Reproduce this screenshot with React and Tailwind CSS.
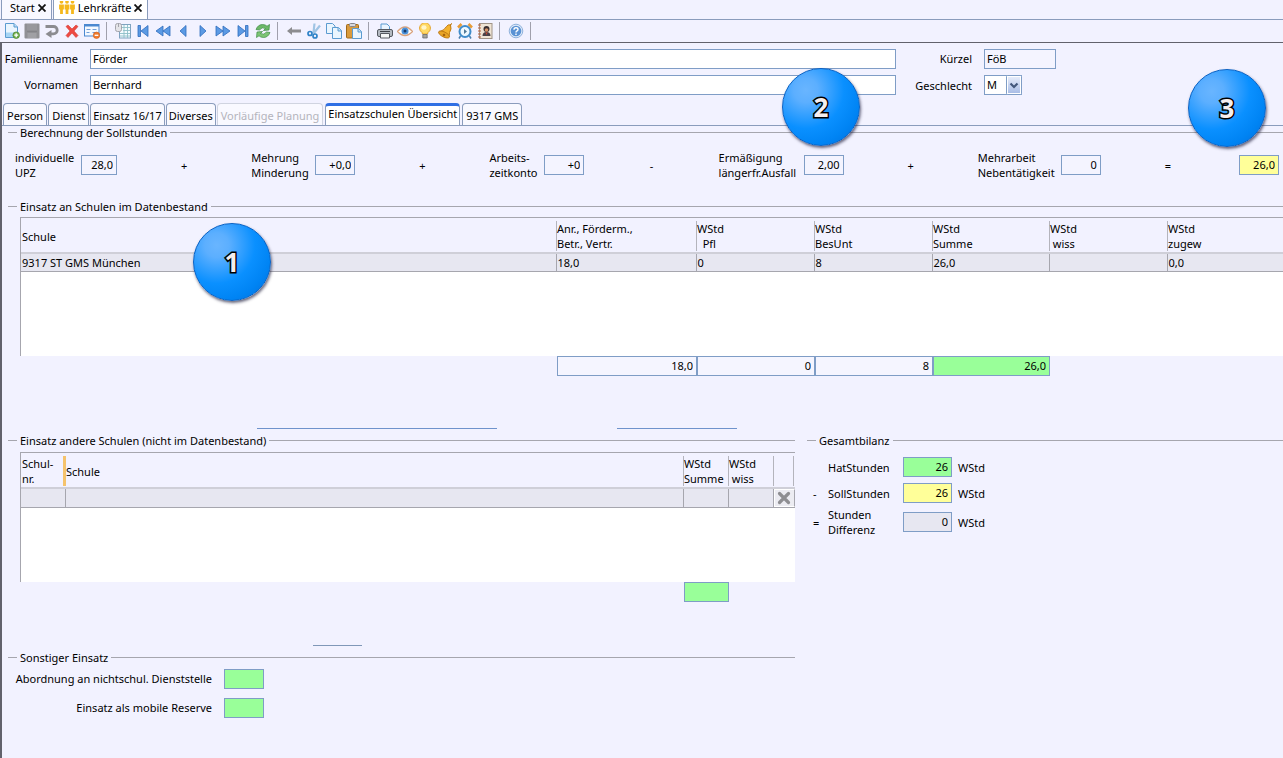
import clsx from 'clsx';

function Svg({ children }) {
  return (
    <svg viewBox="0 0 16 16" className="h-4 w-4" aria-hidden="true">
      {children}
    </svg>
  );
}

const blue = { fill: '#5b9ae4', stroke: '#2f6cbc', strokeWidth: 0.8, strokeLinejoin: 'round' };
const paper = { fill: '#eaf5fe', stroke: '#5b9bd0', strokeWidth: 1 };

const icons = {
  Neu: (
    <Svg>
      <path d="M1.500 0.500h8.500l3.500 3.500v10.500h-12z" {...paper} />
      <path d="M10 0.500v3.500h3.500" fill="#b9dcf5" stroke="#5b9bd0" />
      <path d="M2 9.500h11v4.500h-11z" fill="#a6d4f4" />
      <circle cx="12.200" cy="12.200" r="3.300" fill="#6fae4a" stroke="#4b8530" strokeWidth="0.700" />
      <path d="M12.200 10.200v4M10.200 12.200h4" stroke="#fff" strokeWidth="1.300" />
    </Svg>
  ),
  Speichern: (
    <Svg>
      <path d="M0.500 1.500q0-1 1-1h13q1 0 1 1v13q0 1-1 1h-13q-1 0-1-1z" fill="#909094" />
      <path d="M3 1h10v6h-10z" fill="#98989c" />
      <path d="M3.500 10h9v5h-9z" fill="#a0a0a4" />
      <path d="M3 8.500h10" stroke="#848488" />
    </Svg>
  ),
  Zurück: (
    <Svg>
      <path d="M1.500 3.500h8a3.700 3.700 0 0 1 0 7.400h-4" fill="none" stroke="#8c8c90" strokeWidth="2.800" />
      <path d="M7.500 7v8l-6-4z" fill="#8c8c90" />
    </Svg>
  ),
  Löschen: (
    <Svg>
      <path d="M2 3.500l2-1.500 4 4 4-4 2 1.500-4 4.500 4 4.500-2 2-4-4.500-4 4.500-2-2 4-4.500z" fill="#ee4a42" stroke="#d43a34" strokeWidth="0.600" />
    </Svg>
  ),
  Maske: (
    <Svg>
      <rect x="0.500" y="1.500" width="14.500" height="11.500" fill="#f4f9ff" stroke="#4a88d0" />
      <path d="M1 2.500h14" stroke="#4a88d0" strokeWidth="2" />
      <path d="M2.500 6.500h4M2.500 9.500h3M8.500 6.500h4M8.500 9.500h3" stroke="#6f9ed8" strokeWidth="1.200" />
      <circle cx="12.500" cy="12.300" r="3.200" fill="#f07a2c" stroke="#d05c14" strokeWidth="0.600" />
      <path d="M10.700 12.300h3.600" stroke="#fff" strokeWidth="1.300" />
    </Svg>
  ),
  Liste: (
    <Svg>
      <rect x="4.500" y="1.500" width="11" height="13.500" fill="#f4fbff" stroke="#7fa3c0" />
      <path d="M5 4.500h10M8 7.500h7M5 10.500h10M5 13h10M9 2v13M12.500 2v13" stroke="#8fc0c8" strokeWidth="0.900" />
      <rect x="0.500" y="0.500" width="6" height="8" rx="2" fill="#e4e4e8" stroke="#a4a4ac" />
      <path d="M3.500 1v3" stroke="#a4a4ac" />
    </Svg>
  ),
  Erster: (
    <Svg>
      <path d="M3 2.500h2.500v11h-2.500zM13 2.500v11l-7-5.500z" {...blue} />
    </Svg>
  ),
  Zurückblättern: (
    <Svg>
      <path d="M8 3v10l-7-5zM15 3v10l-7-5z" {...blue} />
    </Svg>
  ),
  Vorheriger: (
    <Svg>
      <path d="M11 2.500v11l-6-5.500z" {...blue} />
    </Svg>
  ),
  Nächster: (
    <Svg>
      <path d="M5 2.500v11l6-5.500z" {...blue} />
    </Svg>
  ),
  Vorblättern: (
    <Svg>
      <path d="M1 3v10l7-5zM8 3v10l7-5z" {...blue} />
    </Svg>
  ),
  Letzter: (
    <Svg>
      <path d="M3 2.500v11l7-5.500zM10.500 2.500h2.500v11h-2.500z" {...blue} />
    </Svg>
  ),
  Aktualisieren: (
    <Svg>
      <path d="M1 6.500q2-5 6.500-5 3 0 4.500 1.700l2.500-1.700-0.500 5.500-5.500 0.500 2-2q-3.500-2-6 1.500z" fill="#6cb868" stroke="#3d8c45" strokeWidth="0.700" />
      <path d="M15 9.500q-2 5-6.500 5-3 0-4.500-1.700l-2.500 1.700 0.500-5.500 5.500-0.500-2 2q3.500 2 6-1.500z" fill="#7cc474" stroke="#3d8c45" strokeWidth="0.700" />
    </Svg>
  ),
  Links: (
    <Svg>
      <path d="M1 8l5-4v2.500h9v3h-9v2.500z" fill="#8c8c90" />
    </Svg>
  ),
  Ausschneiden: (
    <Svg>
      <path d="M8.500 0.500l-1 9M14 2.500l-6.500 8" stroke="#9fc4e4" strokeWidth="2.200" />
      <circle cx="4" cy="10.500" r="2" fill="none" stroke="#2f83c8" strokeWidth="1.700" />
      <circle cx="9" cy="13" r="2" fill="none" stroke="#2f83c8" strokeWidth="1.700" />
    </Svg>
  ),
  Kopieren: (
    <Svg>
      <path d="M0.500 0.500h6l2.500 2.500v7.500h-8.500z" {...paper} />
      <path d="M6.500 4.500h6l3 3v8h-9z" {...paper} />
      <path d="M12 4.500v3.500h3.500" fill="#c4e2f8" stroke="#5b9bd0" />
    </Svg>
  ),
  Einfügen: (
    <Svg>
      <rect x="0.500" y="1.500" width="12" height="13.500" rx="1" fill="#d99a3c" stroke="#a06818" />
      <rect x="3.500" y="0.500" width="6" height="3" rx="1" fill="#d8d8dc" stroke="#85858c" />
      <path d="M6.500 5.500h6l3 3v7h-9z" {...paper} />
      <path d="M12 5.500v3.500h3.500" fill="#c4e2f8" stroke="#5b9bd0" />
    </Svg>
  ),
  Drucken: (
    <Svg>
      <path d="M4 7v-6h6l2.500 2.500v3.500z" {...paper} />
      <rect x="0.500" y="6.500" width="15" height="7" rx="1.500" fill="#b4bac2" stroke="#565a62" />
      <path d="M3.500 10.500h9v4.500h-9z" fill="#f4f6f8" stroke="#565a62" />
      <path d="M3 8.500h10" stroke="#3c4048" />
    </Svg>
  ),
  Ansicht: (
    <Svg>
      <path d="M0.500 8.500q7.500-9 15 0-7.500 8-15 0z" fill="#fff" stroke="#d9a27c" strokeWidth="1.300" />
      <circle cx="8" cy="8" r="3.500" fill="#4b91da" />
      <circle cx="8" cy="8" r="1.500" fill="#173a6a" />
    </Svg>
  ),
  Hinweis: (
    <Svg>
      <path d="M5.500 11q0-1.500-2.200-3.200a5.400 5.400 0 1 1 9.400 0q-2.200 1.700-2.200 3.200z" fill="#ffd964" stroke="#e2a22c" />
      <ellipse cx="7" cy="4.500" rx="2.600" ry="2.200" fill="#fff5c8" />
      <path d="M5.800 11.500h4.400v3.500h-4.400z" fill="#a4a49c" stroke="#5e5e64" strokeWidth="0.700" />
    </Svg>
  ),
  Glocke: (
    <Svg>
      <path d="M14.500 0.500l-1 1.500q1.500 4-1 7.500l-0.500 4.500-10-5q6-2 7.500-5.500 1.500-2.500 4-1.500z" fill="#f4b22e" stroke="#c0790e" />
      <ellipse cx="7" cy="11.500" rx="6" ry="2.500" transform="rotate(27 7 11.500)" fill="#e8a428" stroke="#b06c0c" strokeWidth="0.700" />
      <circle cx="7" cy="12" r="1.300" fill="#a8640c" />
    </Svg>
  ),
  Wecker: (
    <Svg>
      <path d="M1 4.500l3.500-3.500M15 4.500l-3.500-3.500" stroke="#e79b36" strokeWidth="2.500" />
      <path d="M3.500 13l-1.500 2.500M12.500 13l1.500 2.500" stroke="#4a7fae" strokeWidth="1.500" />
      <circle cx="8" cy="8.500" r="5.500" fill="#eef8ff" stroke="#3f8ccb" strokeWidth="2" />
      <path d="M7 6l3 2.500-3 2.500z" fill="#4f7898" />
    </Svg>
  ),
  Adressbuch: (
    <Svg>
      <rect x="2.500" y="0.500" width="12.500" height="15" fill="#efe4d4" stroke="#a09488" />
      <path d="M1 2h3M1 5h3M1 8h3M1 11h3M1 14h3" stroke="#b8603c" strokeWidth="1.200" />
      <circle cx="9.500" cy="6" r="3" fill="#3c3030" />
      <circle cx="9.500" cy="7" r="1.800" fill="#d89468" />
      <path d="M5.500 13q0-4 4-4t4 4z" fill="#4c4248" />
      <path d="M8.500 9.500h2l-1 2.500z" fill="#d04a30" />
    </Svg>
  ),
  Hilfe: (
    <Svg>
      <circle cx="8" cy="8" r="6.800" fill="#dfeaf8" stroke="#8fb2dc" strokeWidth="1" />
      <circle cx="8" cy="8" r="5.300" fill="#5a92d4" />
      <path d="M6 6.700q0-2 2-2t2 1.700q0 1-1.200 1.600-0.800 0.500-0.800 1.400M8 10.600v1.300" fill="none" stroke="#fff" strokeWidth="1.400" />
    </Svg>
  ),
};

const toolbar = [
  ['Neu', 'Speichern', 'Zurück', 'Löschen', 'Maske'],
  ['Liste', 'Erster', 'Zurückblättern', 'Vorheriger', 'Nächster', 'Vorblättern', 'Letzter', 'Aktualisieren'],
  ['Links', 'Ausschneiden', 'Kopieren', 'Einfügen'],
  ['Drucken', 'Ansicht', 'Hinweis', 'Glocke', 'Wecker', 'Adressbuch'],
  ['Hilfe'],
];

function CloseMark() {
  return (
    <svg viewBox="0 0 8 8" className="h-2 w-2" aria-hidden="true">
      <path d="M0.500 0.500l7 7M7.500 0.500l-7 7" stroke="#111" strokeWidth="1.800" />
    </svg>
  );
}

function PeopleIcon() {
  return (
    <svg viewBox="0 0 16 14" className="h-3.5 w-4" aria-hidden="true">
      {[2.5, 8, 13.5].map((x) => (
        <g key={x} fill="#f5b81c">
          <circle cx={x} cy="1" r="1.800" />
          <path d={`M${x - 2.4} 3.500h4.800v5h-1v4.500h-2.800v-4.500h-1z`} />
        </g>
      ))}
    </svg>
  );
}

function WindowTabs() {
  return (
    <div className="flex h-5 items-stretch gap-px border-b border-[#8a9cbc] pl-px">
      <button className="flex items-center gap-[3px] border-x border-[#8a9cbc] bg-[#f8f8ff] pr-[5px] pb-1 pl-2">
        Start <CloseMark />
      </button>
      <button className="flex items-center gap-[3px] border-x border-[#8a9cbc] bg-white px-[5px] pb-1">
        <PeopleIcon />
        Lehrkräfte <CloseMark />
      </button>
    </div>
  );
}

function Toolbar() {
  return (
    <div className="flex h-[22px] items-center gap-1 pl-1">
      {toolbar.map((group) => (
        <div key={group[0]} className="flex items-center gap-1">
          {group.map((name) => (
            <button key={name} aria-label={name}>
              {icons[name]}
            </button>
          ))}
          <div className="mr-1 ml-0.5 h-[18px] w-px bg-[#a0a0ac]" />
        </div>
      ))}
    </div>
  );
}

function Field({ label, value = '', className }) {
  return (
    <input
      aria-label={label}
      defaultValue={value}
      className={clsx('h-5 border border-[#7f9dc6] pb-px outline-none', className)}
    />
  );
}

function PersonHeader() {
  return (
    <div className="flex pt-1.5 pb-2">
      <div className="flex w-[894px] shrink flex-col gap-1.5">
        <label className="flex items-center gap-3">
          <span className="w-[76px] pb-0.5 text-right">Familienname</span>
          <input defaultValue="Förder" className="h-5 flex-1 border border-[#7f9dc6] bg-white px-0.5 pb-px" />
        </label>
        <label className="flex items-center gap-3">
          <span className="w-[76px] pb-0.5 text-right">Vornamen</span>
          <input defaultValue="Bernhard" className="h-5 flex-1 border border-[#7f9dc6] bg-white px-0.5 pb-px" />
        </label>
      </div>
      <div className="flex flex-col gap-1.5">
        <label className="flex items-center gap-3">
          <span className="w-[76px] pb-0.5 text-right">Kürzel</span>
          <input defaultValue="FöB" className="h-5 w-[72px] border border-[#7f9dc6] bg-[#f4f4ff] px-0.5 pb-px" />
        </label>
        <label className="flex items-center gap-3">
          <span className="w-[76px] text-right">Geschlecht</span>
          <span className="relative flex">
            <select className="h-5 w-[38px] appearance-none border border-[#7f9dc6] bg-white px-0.5 pb-px">
              <option>M</option>
              <option>W</option>
            </select>
            <svg viewBox="0 0 16 20" className="pointer-events-none absolute top-0 right-0 h-5 w-4" aria-hidden="true">
              <defs>
                <linearGradient id="drop" x1="0" y1="0" x2="0" y2="1">
                  <stop offset="0" stopColor="#e6ecfa" />
                  <stop offset="1" stopColor="#a9bde6" />
                </linearGradient>
              </defs>
              <rect x="0.500" y="0.500" width="15" height="19" rx="1" fill="#fff" stroke="#7f9dc6" />
              <rect x="2" y="2" width="12" height="16" fill="url(#drop)" />
              <path d="M4.500 8.500l3.500 3.500 3.500-3.500" fill="none" stroke="#44587c" strokeWidth="2.200" />
            </svg>
          </span>
        </label>
      </div>
    </div>
  );
}

const tabs = ['Person', 'Dienst', 'Einsatz 16/17', 'Diverses', 'Vorläufige Planung', 'Einsatzschulen Übersicht', '9317 GMS'];

function TabBar() {
  return (
    <div className="flex h-[23px] items-stretch gap-px border-b border-[#8a9cbc] pl-px">
      {tabs.map((tab) => (
        <button
          key={tab}
          disabled={tab === 'Vorläufige Planung'}
          className={clsx(
            'rounded-t-sm border border-b-0 whitespace-nowrap',
            tab === 'Einsatzschulen Übersicht'
              ? 'mx-px border-t-3 border-[#8a9cbc] border-t-[#2f6fe4] bg-white pb-1'
              : 'bg-[#f9f9ff] pt-0.5',
            tab === 'Vorläufige Planung' ? 'border-[#d0d4e0] text-[#b4b4bc]' : 'border-[#8a9cbc]',
            tab.startsWith('Einsatz') || tab === 'Diverses' ? 'px-0.5' : 'px-[3px]',
          )}
        >
          {tab}
        </button>
      ))}
    </div>
  );
}

function Group({ title, className, children }) {
  return (
    <fieldset className={clsx('min-w-0 border-t border-[#a6a6ae]', className)}>
      <legend className="ml-[9px] px-[3px] leading-[13px]">{title}</legend>
      {children}
    </fieldset>
  );
}

const terms = [
  { lines: ['individuelle', 'UPZ'], value: '28,0', label: 'w-[66px]', op: '+' },
  { lines: ['Mehrung', 'Minderung'], value: '+0,0', label: 'w-16', op: '+' },
  { lines: ['Arbeits-', 'zeitkonto'], value: '+0', label: 'w-[55px]', op: '-' },
  { lines: ['Ermäßigung', 'längerfr.Ausfall'], value: '2,00', label: 'w-[85px]', op: '+' },
  { lines: ['Mehrarbeit', 'Nebentätigkeit'], value: '0', label: 'w-[83px]', op: '=' },
];

function SollStunden() {
  return (
    <Group title="Berechnung der Sollstunden">
      <div className="flex items-center justify-between pt-[11px] pr-1 pb-5 pl-[7px]">
        {terms.flatMap((t, i) => [
          <label key={t.lines[0]} className="flex items-center">
            <span className={clsx('whitespace-nowrap', t.label)}>
              {t.lines[0]}
              <br />
              {t.lines[1]}
            </span>
            <Field
              label={t.lines.join(' ')}
              value={t.value}
              className={clsx('bg-[#f4f4ff] px-[3px] text-right', i === 0 ? 'w-9' : 'w-10')}
            />
          </label>,
          <span key={i} className="w-2 text-center">
            {t.op}
          </span>,
        ])}
        <Field label="Sollstunden" value="26,0" className="ml-1 w-10 bg-[#ffff99] px-[3px] text-right" />
      </div>
    </Group>
  );
}

const schoolCols = [
  ['Anr., Förderm.,', 'Betr., Vertr.', 'w-[140px]', '18,0'],
  ['WStd', '\u00a0\u00a0Pfl', 'w-[118px]', '0'],
  ['WStd', 'BesUnt', 'w-[118px]', '8'],
  ['WStd', 'Summe', 'w-[117px]', '26,0'],
  ['WStd', '\u00a0wiss', 'w-[118px]', ''],
  ['WStd', 'zugew', 'w-[116px]', '0,0'],
];

// column title with the short divider on its left
function HeadCell({ first, second, divider = 'border-[#b4b4bc]' }) {
  return (
    <div className={clsx('flex h-[30px] flex-col justify-center border-l whitespace-nowrap', divider)}>
      <span>{first}</span>
      {second && <span>{second}</span>}
    </div>
  );
}

function Schulen() {
  return (
    <Group title="Einsatz an Schulen im Datenbestand">
      <div className="mt-1 ml-3 h-[139px] border-t border-l border-[#a6a6ae] bg-white">
        <table className="w-full table-fixed border-collapse text-left">
          <thead className="bg-[#f2f2ff]">
            <tr className="border-b-2 border-[#cfcfd8]">
              <th className="p-0 pt-[3px] pb-px font-normal">
                <HeadCell first="Schule" divider="border-transparent" />
              </th>
              {schoolCols.map(([first, second, width]) => (
                <th key={second} className={clsx('p-0 pt-[3px] pb-px font-normal', width)}>
                  <HeadCell first={first} second={second} />
                </th>
              ))}
            </tr>
          </thead>
          <tbody>
            <tr className="h-[18px] border-b border-[#a6a6ae] bg-[#e7e7f1]">
              <td className="p-0 pl-px">9317 ST GMS München</td>
              {schoolCols.map(([, second, , value]) => (
                <td key={second} className="border-l border-[#a6a6ae] p-0 pl-px">
                  {value}
                </td>
              ))}
            </tr>
          </tbody>
        </table>
      </div>
      <div className="flex justify-end pr-[233px]">
        <Field label="Summe Anrechnungen" value="18,0" className="w-[140px] bg-[#f5f5ff] px-[3px] text-right" />
        <Field label="Summe Pfl" value="0" className="w-[118px] bg-[#f5f5ff] px-[3px] text-right" />
        <Field label="Summe BesUnt" value="8" className="w-[118px] bg-[#f5f5ff] px-[3px] text-right" />
        <Field label="Summe gesamt" value="26,0" className="w-[117px] bg-[#99ff99] px-[3px] text-right" />
      </div>
    </Group>
  );
}

function AndereSchulen() {
  return (
    <Group title="Einsatz andere Schulen (nicht im Datenbestand)">
      <div className="mt-[5px] ml-3 h-[130px] border-t border-l border-[#a6a6ae] bg-white">
        <table className="w-full table-fixed border-collapse text-left">
          <thead className="bg-[#f2f2ff]">
            <tr className="border-b-2 border-[#cfcfd8]">
              <th className="w-11 p-0 pt-[3px] pb-px font-normal">
                <HeadCell first="Schul-" second="nr." divider="border-transparent" />
              </th>
              <th className="p-0 pt-[3px] pb-px font-normal">
                <div className="-ml-0.5">
                  <HeadCell first="Schule" divider="border-l-3 border-[#f5c36c]" />
                </div>
              </th>
              <th className="w-[45px] p-0 pt-[3px] pb-px font-normal">
                <HeadCell first="WStd" second="Summe" />
              </th>
              <th className="w-[45px] p-0 pt-[3px] pb-px font-normal">
                <HeadCell first="WStd" second={'\u00a0wiss'} />
              </th>
              <th className="w-[22px] p-0 pt-[3px] pr-px pb-px font-normal">
                <div className="h-[30px] border-x border-[#b4b4bc]" />
              </th>
            </tr>
          </thead>
          <tbody>
            <tr className="h-[18px] border-b border-[#a6a6ae] bg-[#e7e7f1]">
              <td className="p-0" />
              <td className="border-l border-[#a6a6ae] p-0" />
              <td className="border-l border-[#a6a6ae] p-0" />
              <td className="border-l border-[#a6a6ae] p-0" />
              <td className="border-l border-[#a6a6ae] p-0">
                <button
                  aria-label="Zeile entfernen"
                  className="flex h-[18px] w-full items-center justify-center border border-white border-r-[#a6a6ae] bg-[#ececf2]"
                >
                  <svg viewBox="0 0 14 14" className="h-3.5 w-3.5" aria-hidden="true">
                    <path d="M2.500 2.500l9 9M11.500 2.500l-9 9" stroke="#8e8e92" strokeWidth="3.200" strokeLinecap="round" />
                  </svg>
                </button>
              </td>
            </tr>
          </tbody>
        </table>
      </div>
      <div className="flex justify-end pr-[66px]">
        <Field label="Summe andere Schulen" className="w-[45px] bg-[#99ff99]" />
      </div>
    </Group>
  );
}

const balance = [
  { op: '', label: 'HatStunden', value: '26', color: 'bg-[#99ff99]' },
  { op: '-', label: 'SollStunden', value: '26', color: 'bg-[#ffff99]' },
  { op: '=', label: 'Stunden Differenz', value: '0', color: 'bg-[#e7e7f1]' },
];

function Gesamtbilanz() {
  return (
    <Group title="Gesamtbilanz">
      <div className="flex flex-col gap-1 pt-[9px] pl-1.5">
        {balance.map((row, i) => (
          <label key={row.label} className={clsx('flex items-center', i < 2 ? 'h-[22px]' : 'h-7')}>
            <span className="w-[15px]">{row.op}</span>
            <span className={i < 2 ? 'w-[75px]' : 'mr-[15px] w-[60px]'}>{row.label}</span>
            <Field label={row.label} value={row.value} className={clsx('w-[49px] px-[3px] text-right', row.color)} />
            <span className="pl-1.5">WStd</span>
          </label>
        ))}
      </div>
    </Group>
  );
}

function SonstigerEinsatz() {
  return (
    <Group title="Sonstiger Einsatz">
      <div className="flex flex-col gap-[9px] pt-[5px]">
        <label className="flex items-center gap-3">
          <span className="w-[204px] pb-0.5 text-right whitespace-nowrap">Abordnung an nichtschul. Dienststelle</span>
          <Field label="Abordnung an nichtschul. Dienststelle" className="w-10 bg-[#99ff99]" />
        </label>
        <label className="flex items-center gap-3">
          <span className="w-[204px] pb-0.5 text-right whitespace-nowrap">Einsatz als mobile Reserve</span>
          <Field label="Einsatz als mobile Reserve" className="w-10 bg-[#99ff99]" />
        </label>
      </div>
    </Group>
  );
}

function Badge({ number, className }) {
  return (
    <div
      className={clsx(
        'absolute flex h-[78px] w-[78px] items-center justify-center rounded-full border border-[#0a62c4] shadow-[1px_2px_3px_rgba(40,40,70,0.7)]',
        'bg-[radial-gradient(circle_at_30%_28%,#69b5ff_0%,#5cafff_16%,#0a90ff_50%,#0084f4_72%,#006cd8_100%)]',
        'text-[26px] leading-8 font-bold text-[#f6eeee] [-webkit-text-stroke:3px_#000] [paint-order:stroke_fill]',
        className,
      )}
    >
      {number}
    </div>
  );
}

export default function App() {
  return (
    <div className="relative flex min-h-screen flex-col overflow-hidden bg-[#f2f2ff] font-['Noto_Sans','Open_Sans',sans-serif] text-[11px] leading-[15px] text-black">
      <WindowTabs />
      <Toolbar />
      <main className="flex-1 border-t border-l-2 border-[#62626c]">
        <PersonHeader />
        <TabBar />
        <div className="pl-1.5">
          <SollStunden />
          <Schulen />
          <div className="mt-[52px] mb-[5px] flex gap-[120px] pl-[249px]">
            <div className="h-px w-60 bg-[#6f93cc]" />
            <div className="h-px w-[120px] bg-[#6f93cc]" />
          </div>
          <div className="grid grid-cols-[787fr_476fr] gap-3">
            <div>
              <AndereSchulen />
              <div className="mt-[43px] mb-[5px] ml-[305px] h-px w-[49px] bg-[#8098b8]" />
              <SonstigerEinsatz />
            </div>
            <Gesamtbilanz />
          </div>
        </div>
      </main>
      <Badge number="1" className="top-[223px] left-[193px]" />
      <Badge number="2" className="top-[68px] left-[782px]" />
      <Badge number="3" className="top-[69px] right-[17px]" />
    </div>
  );
}
